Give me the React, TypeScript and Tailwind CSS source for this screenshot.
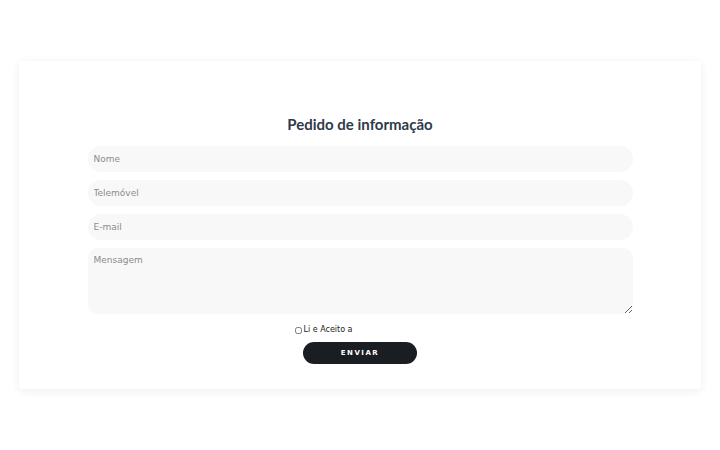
const field =
  "h-[26px] rounded-[13px] bg-[#f8f8f8] px-[6px] font-['DejaVu_Sans',sans-serif] text-[9px] text-gray-700 placeholder:text-[#8c8c8c] outline-none";

export default function App() {
  return (
    <div className="min-h-[450px] bg-white pt-[61px] px-[19px] font-['DejaVu_Sans',sans-serif]">
      <div className="bg-white rounded-[3px] shadow-[0_2px_10px_rgba(0,0,0,0.07)] pt-[54px] pb-[25px]">
        <h2 className="text-center font-['Lato',sans-serif] text-[15px] font-bold text-[#2f3a4b] leading-[18px] mb-[13px]">
          Pedido de informação
        </h2>
        <form className="w-[545px] mx-auto flex flex-col gap-[8px]" onSubmit={(e) => e.preventDefault()}>
          <input type="text" placeholder="Nome" className={field} />
          <input type="text" placeholder="Telemóvel" className={field} />
          <input type="email" placeholder="E-mail" className={field} />
          <textarea
            placeholder="Mensagem"
            className="h-[66px] rounded-[10px] bg-[#f8f8f8] px-[6px] pt-[6px] font-['DejaVu_Sans',sans-serif] text-[9px] text-gray-700 placeholder:text-[#8c8c8c] outline-none"
          />
          <label className="flex items-center justify-center gap-[1px] text-[8px] text-[#222] mt-[2px] pr-[72px]">
            <input type="checkbox" className="w-[7px] h-[7px] m-0" />
            Li e Aceito a
          </label>
          <button
            type="submit"
            className="mx-auto -mt-[2px] w-[114px] h-[22px] rounded-full bg-[#1a1d21] font-['DejaVu_Sans',sans-serif] text-white text-[7px] font-bold tracking-[1.5px]"
          >
            ENVIAR
          </button>
        </form>
      </div>
    </div>
  );
}
